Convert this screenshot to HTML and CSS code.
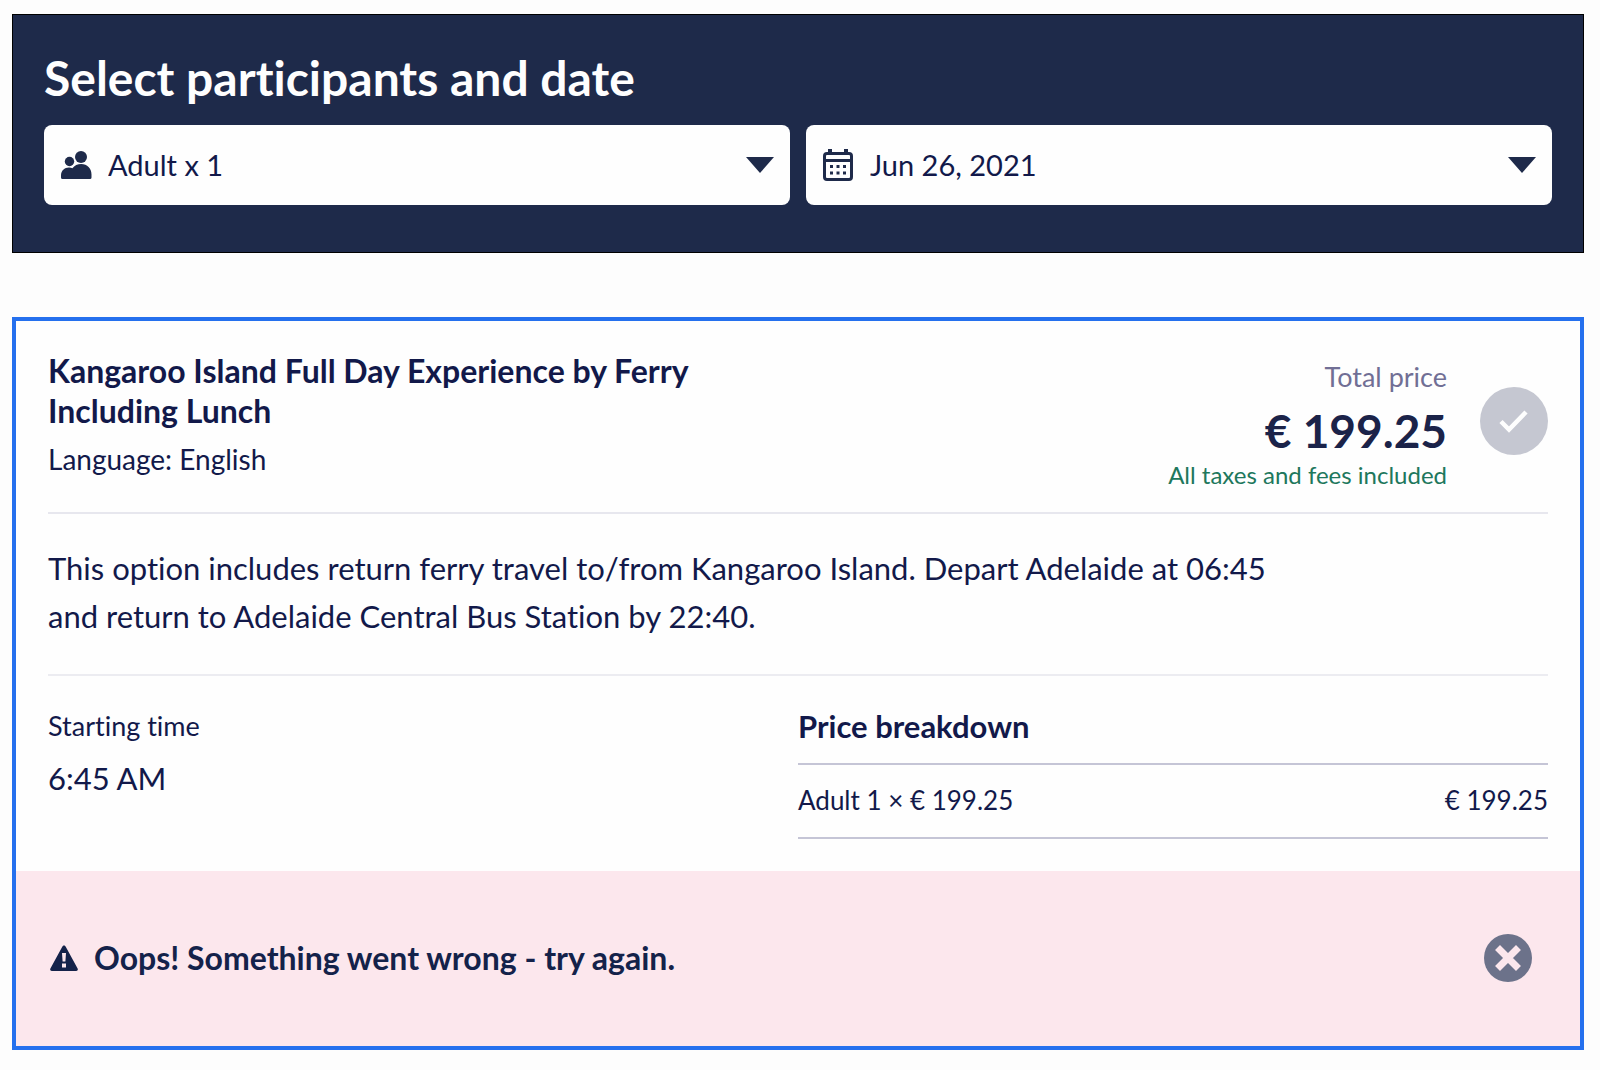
FILE: index.html
```html
<!DOCTYPE html>
<html lang="en">
<head>
  <meta charset="utf-8">
  <meta name="viewport" content="width=device-width, initial-scale=1">
  <title>Select participants and date</title>
  <link rel="stylesheet" href="styles.css">
</head>
<body>
  <main class="page">
    <section class="search">
      <h1 class="search-title">Select participants and date</h1>
      <form class="search-fields">
        <div class="field">
          <svg class="field-icon" viewBox="0 0 32 32" aria-hidden="true">
            <circle cx="9.500" cy="12.500" r="4.700"/>
            <circle cx="21" cy="8" r="6"/>
            <path d="M1 28.500v-2c0-5 3.500-8 8-8 1.200 0 2.400.2 3.400.7 2-2.600 5.200-4.200 8.800-4.200 6 0 10.300 4.500 10.300 10.500v3q0 1.500-1.500 1.500h-27.500q-1.500 0-1.500-1.500z"/>
          </svg>
          <select class="field-select" aria-label="Participants">
            <option>Adult x 1</option>
          </select>
          <svg class="field-arrow" viewBox="0 0 28 16" aria-hidden="true"><path d="M0 0h28l-14 16z"/></svg>
        </div>
        <div class="field">
          <svg class="field-icon" viewBox="0 0 32 32" aria-hidden="true">
            <rect x="2.500" y="4.500" width="27" height="26" rx="2.500" fill="none" stroke="currentColor" stroke-width="3"/>
            <path d="M2 10h28v3h-28zM6 0h4v5h-4zM22 0h4v5h-4z"/>
            <path d="M8 16h3v3h-3zM14.500 16h3v3h-3zM21 16h3v3h-3zM8 22.500h3v3h-3zM14.500 22.500h3v3h-3zM21 22.500h3v3h-3z"/>
          </svg>
          <select class="field-select" aria-label="Date">
            <option>Jun 26, 2021</option>
          </select>
          <svg class="field-arrow" viewBox="0 0 28 16" aria-hidden="true"><path d="M0 0h28l-14 16z"/></svg>
        </div>
      </form>
    </section>

    <article class="option">
      <div class="option-body">
        <header class="option-header">
          <div class="option-heading">
            <h2 class="option-title">Kangaroo Island Full Day Experience by Ferry Including Lunch</h2>
            <p class="option-language">Language: English</p>
          </div>
          <div class="total">
            <p class="total-label">Total price</p>
            <p class="total-price">€ 199.25</p>
            <p class="total-note">All taxes and fees included</p>
          </div>
          <svg class="option-check" viewBox="0 0 68 68" role="img" aria-label="Selected">
            <circle cx="34" cy="34" r="34" fill="#c5c7d1"/>
            <path d="M21 34.500l8 8 17-17.500" fill="none" stroke="#fefefe" stroke-width="4.500"/>
          </svg>
        </header>
        <p class="option-text">This option includes return ferry travel to/from Kangaroo Island. Depart Adelaide at 06:45 and return to Adelaide Central Bus Station by 22:40.</p>
        <div class="details">
          <div class="start">
            <h3 class="start-label">Starting time</h3>
            <p class="start-time">6:45 AM</p>
          </div>
          <table class="breakdown">
            <caption>Price breakdown</caption>
            <tbody>
              <tr>
                <td>Adult 1 × € 199.25</td>
                <td class="amount">€ 199.25</td>
              </tr>
            </tbody>
          </table>
        </div>
      </div>
      <div class="alert" role="alert">
        <svg class="alert-icon" viewBox="0 0 28 26" aria-hidden="true">
          <path d="M14 .5c.8 0 1.200.4 1.600 1.100l12 22c.6 1.200 0 2.400-1.400 2.400h-24.400c-1.400 0-2-1.200-1.400-2.400l12-22c.4-.7.800-1.100 1.600-1.100z"/>
          <path d="M12 8h4l-.6 8.500h-2.800zM12 18.500h4v4h-4z" fill="#fce7ed"/>
        </svg>
        <p class="alert-text">Oops! Something went wrong - try again.</p>
        <button class="alert-close" type="button" aria-label="Close">
          <svg viewBox="0 0 48 48" aria-hidden="true">
            <circle cx="24" cy="24" r="24" fill="#6c728a"/>
            <path d="M16 16l16 16M32 16l-16 16" stroke="#fce7ed" stroke-width="7" stroke-linecap="square"/>
          </svg>
        </button>
      </div>
    </article>
  </main>
</body>
</html>
```
FILE: styles.css
```css
* {
  box-sizing: border-box;
}

body {
  margin: 0;
  background: #fdfdfd;
  color: #12194a;
  font-family: Lato, "Liberation Sans", sans-serif;
  font-size: 31px;
  font-variant-ligatures: none;
}

h1,
h2,
h3,
p {
  margin: 0;
}

.page {
  padding: 14px 16px 20px 12px;
}

.search {
  padding: 31px 31px 47px;
  border: 1px solid #000;
  background: #1e2a4a;
}

.search-title {
  padding-bottom: 15px;
  color: #fefefe;
  font-size: 48px;
  font-weight: 700;
  line-height: 64px;
}

.search-fields {
  display: grid;
  grid-template-columns: 1fr 1fr;
  gap: 16px;
}

.field {
  display: flex;
  align-items: center;
  height: 80px;
  padding: 0 16px;
  border-radius: 8px;
  background: #fefefe;
  color: #1e2a4a;
}

.field-icon {
  flex: none;
  width: 32px;
  height: 32px;
  fill: currentColor;
}

.field-select {
  flex: 1;
  min-width: 0;
  height: 100%;
  padding: 0 0 2px 16px;
  border: 0;
  background: none;
  color: #12194a;
  font: inherit;
  font-size: 29px;
  appearance: none;
}

.field-arrow {
  flex: none;
  width: 28px;
  height: 16px;
  fill: currentColor;
}

.option {
  margin-top: 64px;
  border: 4px solid #2570ee;
  background: #fefefe;
}

.option-body {
  padding: 30px 32px 32px;
}

.option-header {
  display: flex;
  align-items: center;
  padding-bottom: 21px;
  border-bottom: 2px solid #e7e7ee;
}

.option-heading {
  width: 660px;
  margin-right: auto;
  padding-bottom: 12px;
}

.option-title {
  font-size: 32px;
  font-weight: 700;
  line-height: 40px;
}

.option-language {
  padding-top: 8px;
  font-size: 28px;
  line-height: 40px;
}

.total {
  margin-right: 33px;
  padding-top: 8px;
  text-align: right;
}

.total-label {
  color: #716f95;
  font-size: 27px;
  line-height: 36px;
}

.total-price {
  padding-top: 8px;
  color: #1b2349;
  font-size: 46px;
  font-weight: 700;
  line-height: 56px;
}

.total-note {
  color: #20775c;
  font-size: 24px;
  line-height: 32px;
}

.option-check {
  flex: none;
  width: 68px;
  height: 68px;
}

.option-text {
  padding: 30px 240px 34px 0;
  border-bottom: 2px solid #ececf1;
  line-height: 48px;
}

.details {
  display: grid;
  grid-template-columns: 1fr 1fr;
  padding-top: 30px;
}

.start-label {
  font-size: 27px;
  font-weight: 400;
  line-height: 40px;
}

.start-time {
  padding-top: 12px;
  line-height: 40px;
}

.breakdown {
  width: 100%;
  border-collapse: collapse;
  font-size: 26px;
  line-height: 40px;
}

.breakdown caption {
  padding-bottom: 17px;
  font-size: 31px;
  font-weight: 700;
  text-align: left;
}

.breakdown td {
  padding: 15px 0 17px;
  border-top: 2px solid #c5c5d6;
  border-bottom: 2px solid #c5c5d6;
}

.breakdown .amount {
  text-align: right;
}

.alert {
  display: flex;
  align-items: center;
  padding: 63px 48px 64px 34px;
  background: #fce7ed;
  color: #14224a;
}

.alert-icon {
  flex: none;
  width: 28px;
  height: 26px;
  fill: currentColor;
}

.alert-text {
  padding: 0 16px;
  font-size: 32px;
  font-weight: 700;
  line-height: 40px;
}

.alert-close {
  flex: none;
  width: 48px;
  height: 48px;
  margin-left: auto;
  padding: 0;
  border: 0;
  border-radius: 50%;
  background: none;
  cursor: pointer;
}

.alert-close svg {
  display: block;
  width: 100%;
  height: 100%;
}
```
